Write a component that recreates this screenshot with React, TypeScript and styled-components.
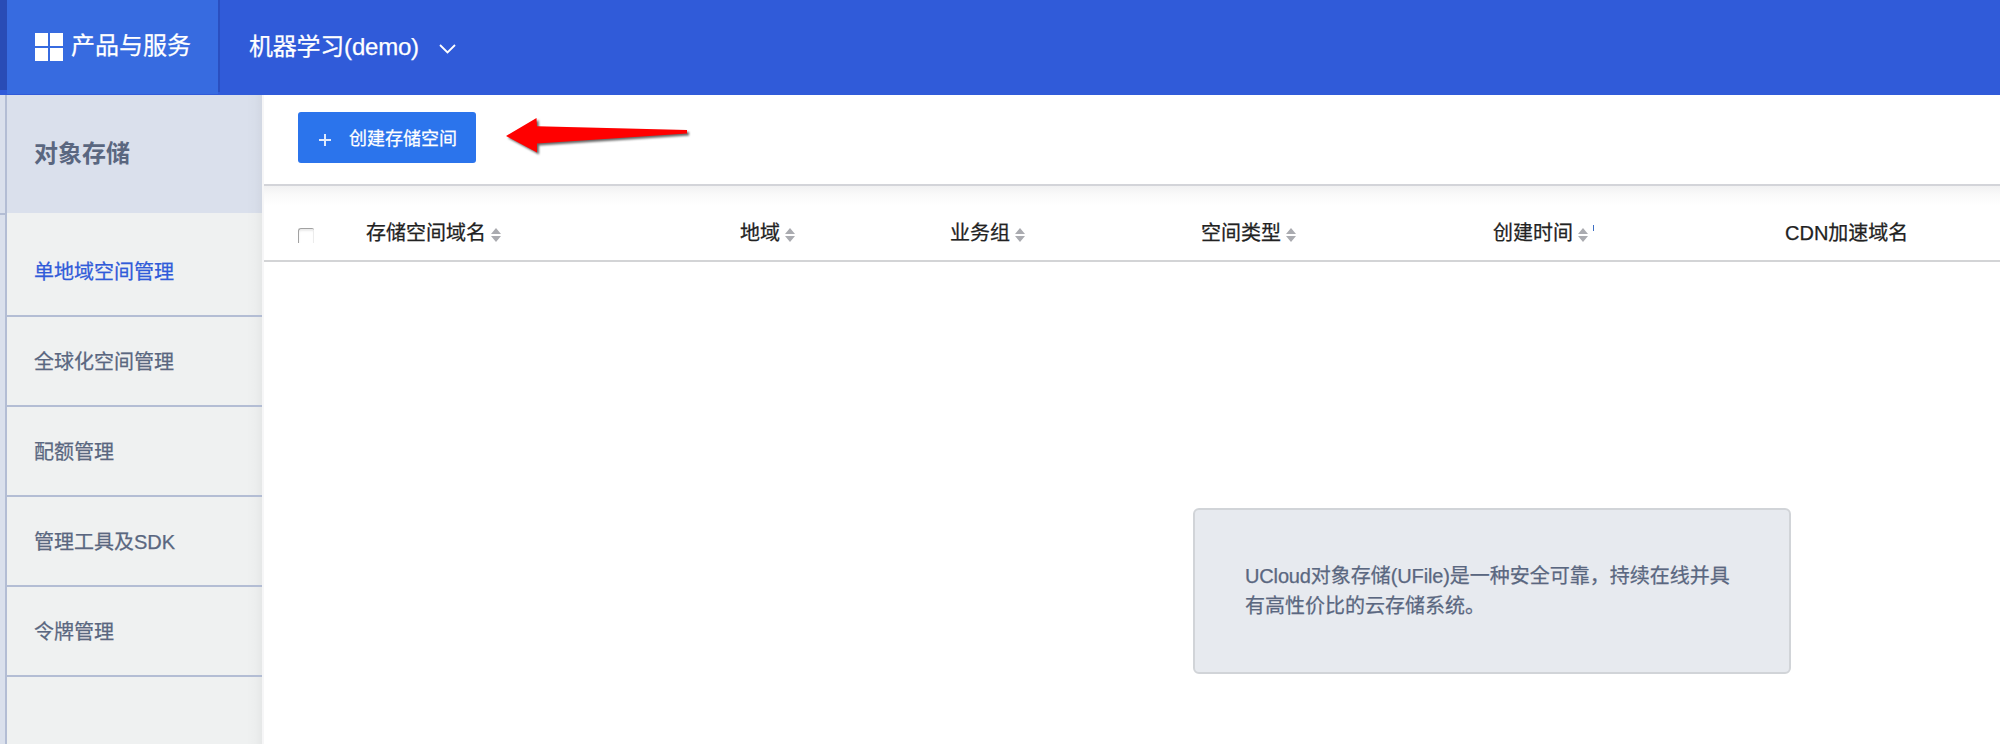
import React from "react";
import styled, { createGlobalStyle } from "styled-components";

const GlobalStyle = createGlobalStyle`
  * { box-sizing: border-box; }
  body {
    margin: 0;
    background: #fff;
    font-family: "Liberation Sans", "Noto Sans CJK SC", sans-serif;
    font-size: 20px;
    -webkit-text-stroke: 0.25px currentColor;
  }
`;

const Page = styled.div`
  height: 744px;
  display: flex;
  flex-direction: column;
  overflow: hidden;
`;

const Header = styled.header`
  height: 95px;
  flex: none;
  display: flex;
  align-items: flex-start;
  background: #305bd9;
  color: #fff;
  font-size: 24px;
`;

const HeaderEdge = styled.div`
  width: 7px;
  height: 90px;
  background: #294cb6;
`;

const Products = styled.div`
  width: 211px;
  height: 94px;
  display: flex;
  align-items: center;
  padding-left: 28px;
  background: #376be0;
  line-height: 36px;

  svg { margin-right: 8px; }
  span { margin-top: -2px; }
`;

const HeaderDivider = styled.div`
  width: 2px;
  height: 92px;
  background: #2a4fc0;
`;

const Project = styled.div`
  height: 94px;
  display: flex;
  align-items: center;
  padding-left: 29px;
  line-height: 36px;

  svg { margin: 3px 0 0 20px; }
`;

const ProjectName = styled.span`
  letter-spacing: -0.22px;
`;

const Body = styled.div`
  flex: 1;
  display: flex;
  min-height: 0;
`;

const Rail = styled.div`
  width: 7px;
  flex: none;
  background: #dae0ec;
  border-right: 2px solid #b3bdd4;
`;

const RailTop = styled.div`
  height: 120px;
  border-bottom: 2px solid #b3bdd4;
`;

const Sidebar = styled.aside`
  width: 257px;
  flex: none;
  border-right: 2px solid #f6f6f7;
  background:
    linear-gradient(to right, rgba(0, 0, 0, 0), rgba(0, 0, 0, 0.012) 9px, rgba(0, 0, 0, 0.04)) right / 16px 100% no-repeat,
    #eff1f1;
`;

const SidebarTitle = styled.h1`
  height: 118px;
  margin: 0;
  padding: 0 0 5px 27px;
  display: flex;
  align-items: center;
  font-size: 24px;
  font-weight: 700;
  color: #5a6780;
  -webkit-text-stroke: 0;
  background:
    linear-gradient(to right, rgba(0, 0, 0, 0), rgba(0, 0, 0, 0.012) 9px, rgba(0, 0, 0, 0.04)) right / 16px 100% no-repeat,
    #dae0ec;
`;

const Menu = styled.nav`
  padding-top: 14px;
`;

const MenuItem = styled.a<{ $active?: boolean }>`
  height: 90px;
  display: flex;
  align-items: center;
  padding: 0 0 1px 27px;
  border-bottom: 2px solid #b3bdd4;
  color: ${(p) => (p.$active ? "#305bd9" : "#5a6780")};
`;

const Main = styled.main`
  flex: 1;
  min-width: 0;
`;

const Toolbar = styled.div`
  height: 91px;
  display: flex;
  align-items: flex-start;
  padding: 17px 0 0 34px;
  border-bottom: 2px solid #d3d4d9;
`;

const CreateButton = styled.button`
  width: 178px;
  height: 51px;
  display: flex;
  align-items: center;
  padding: 0 0 1px 21px;
  border: 0;
  border-radius: 3px;
  background: #2b74ec;
  color: #fff;
  font: inherit;
  font-size: 18px;
  -webkit-text-stroke: inherit;

  svg { margin: 6px 18px 0 0; }
`;

const Pointer = styled.svg`
  margin: -2px 0 0 27px;
  overflow: visible;
  filter: drop-shadow(2px 2px 1.2px rgba(0, 0, 0, 0.6));
`;

const TableHead = styled.div`
  height: 76px;
  display: grid;
  grid-template-columns: 68px 374px 210px 251px 292px 292px 1fr;
  padding-left: 34px;
  border-bottom: 2px solid #d3d4d6;
  background: linear-gradient(#f1f1f2, #fafafa 9px, #fff 20px) top / 100% 20px no-repeat;
  color: #222;
`;

const HeadCell = styled.div`
  display: flex;
  align-items: center;
  padding-top: 22px;
  height: 72px;
  line-height: 30px;

  svg { margin: 3px 0 0 5px; }
`;

const Checkbox = styled.span`
  width: 16px;
  height: 15px;
  margin-top: 5px;
  border: solid #a2a2a2;
  border-width: 1.5px 0 0 1.5px;
  border-radius: 3px 2px 0 0;
  box-shadow: inset -1px 0 0 #ececec, inset 0 2px 2px #ebebeb;
`;

const Tick = styled.i`
  width: 1px;
  height: 6px;
  margin: -10px 0 0 5px;
  background: #3d6fc4;
`;

const Notice = styled.section`
  width: 598px;
  height: 166px;
  margin: 246px 0 0 929px;
  padding: 51px 50px 0 50px;
  border: 2px solid #d1d4d8;
  border-radius: 6px;
  background: #e7eaef;
  color: #5a6780;
  line-height: 30px;
`;

const NoticeLine = styled.div`
  white-space: nowrap;
`;

const Latin = styled.span`
  letter-spacing: -0.15px;
`;

const GridIcon = () => (
  <svg width="28" height="28" viewBox="0 0 28 28" fill="#fff">
    <path d="M0 0h13v13H0zM15 0h13v13H15zM0 15h13v13H0zM15 15h13v13H15z" />
  </svg>
);

const ChevronIcon = () => (
  <svg width="17" height="12" viewBox="0 0 17 12" fill="none" stroke="#fff" strokeWidth="1.8">
    <path d="M1 2l7.5 7.5L16 2" />
  </svg>
);

const PlusIcon = () => (
  <svg width="12" height="12" viewBox="0 0 12 12" fill="none" stroke="#dfeafd" strokeWidth="2">
    <path d="M6 0v12M0 6h12" />
  </svg>
);

const SortIcon = () => (
  <svg width="10" height="14" viewBox="0 0 10 14" fill="#aaabb0">
    <path d="M5 0l5 6H0zM0 8h10l-5 6z" />
  </svg>
);

const menu = ["单地域空间管理", "全球化空间管理", "配额管理", "管理工具及SDK", "令牌管理"];
const columns = ["存储空间域名", "地域", "业务组", "空间类型", "创建时间"];

export default function App() {
  return (
    <Page>
      <GlobalStyle />
      <Header>
        <HeaderEdge />
        <Products>
          <GridIcon />
          <span>产品与服务</span>
        </Products>
        <HeaderDivider />
        <Project>
          <ProjectName>机器学习(demo)</ProjectName>
          <ChevronIcon />
        </Project>
      </Header>
      <Body>
        <Rail>
          <RailTop />
        </Rail>
        <Sidebar>
          <SidebarTitle>对象存储</SidebarTitle>
          <Menu>
            {menu.map((label, i) => (
              <MenuItem key={label} $active={i === 0}>{label}</MenuItem>
            ))}
          </Menu>
        </Sidebar>
        <Main>
          <Toolbar>
            <CreateButton>
              <PlusIcon />
              创建存储空间
            </CreateButton>
            <Pointer width="184" height="44" viewBox="503 110 184 44">
              <path fill="#f00" d="M506 136L536.5 118L537 126.3L687 130V133.5L537 143.5V152.5Z" />
            </Pointer>
          </Toolbar>
          <TableHead>
            <HeadCell><Checkbox /></HeadCell>
            {columns.map((label, i) => (
              <HeadCell key={label}>
                {label}
                <SortIcon />
                {i === columns.length - 1 && <Tick />}
              </HeadCell>
            ))}
            <HeadCell>CDN加速域名</HeadCell>
          </TableHead>
          <Notice>
            <NoticeLine><Latin>UCloud</Latin>对象存储<Latin>(UFile)</Latin>是一种安全可靠，持续在线并具</NoticeLine>
            <NoticeLine>有高性价比的云存储系统。</NoticeLine>
          </Notice>
        </Main>
      </Body>
    </Page>
  );
}
